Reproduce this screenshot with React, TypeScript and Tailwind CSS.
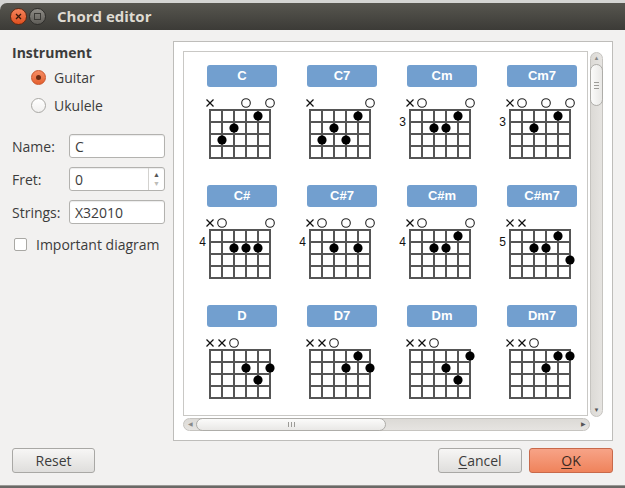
import React from 'react';

// Chord editor dialog (Ubuntu Ambiance look)

type Chord = {
  name: string;
  marks: string; // per string: x = muted, o = open, - = nothing
  dots: [number, number][]; // [string, fret]
  pos?: number;
};

const CHORDS: Chord[] = [
  { name: 'C', marks: 'x--o-o', dots: [[1, 3], [2, 2], [4, 1]] },
  { name: 'C7', marks: 'x----o', dots: [[1, 3], [2, 2], [3, 3], [4, 1]] },
  { name: 'Cm', marks: 'xo---o', dots: [[2, 2], [3, 2], [4, 1]], pos: 3 },
  { name: 'Cm7', marks: 'xo-o-o', dots: [[2, 2], [4, 1]], pos: 3 },
  { name: 'C#', marks: 'xo---o', dots: [[2, 2], [3, 2], [4, 2]], pos: 4 },
  { name: 'C#7', marks: 'xo-o-o', dots: [[2, 2], [4, 2]], pos: 4 },
  { name: 'C#m', marks: 'xo---o', dots: [[2, 2], [3, 2], [4, 1]], pos: 4 },
  { name: 'C#m7', marks: 'xx----', dots: [[2, 2], [3, 2], [4, 1], [5, 3]], pos: 5 },
  { name: 'D', marks: 'xxo---', dots: [[3, 2], [4, 3], [5, 2]] },
  { name: 'D7', marks: 'xxo---', dots: [[3, 2], [4, 1], [5, 2]] },
  { name: 'Dm', marks: 'xxo---', dots: [[3, 2], [4, 3], [5, 1]] },
  { name: 'Dm7', marks: 'xxo---', dots: [[3, 2], [4, 1], [5, 1]] },
];

const sx = (i: number) => 3 + 12 * i;

function Diagram({ c }: { c: Chord }) {
  return (
    <svg width={100} height={98} className="block overflow-visible">
      {[0, 1, 2, 3, 4].map((j) => (
        <line key={'f' + j} x1={2} x2={64} y1={23 + 12 * j} y2={23 + 12 * j} stroke="#555" strokeWidth={2} />
      ))}
      {[0, 1, 2, 3, 4, 5].map((i) => (
        <line key={'s' + i} x1={sx(i)} x2={sx(i)} y1={22} y2={72} stroke="#555" strokeWidth={2} />
      ))}
      {c.marks.split('').map((m, i) =>
        m === 'x' ? (
          <g key={'m' + i} stroke="#111" strokeWidth={1.2}>
            <line x1={sx(i) - 3.5} y1={12.5} x2={sx(i) + 3.5} y2={19.5} />
            <line x1={sx(i) + 3.5} y1={12.5} x2={sx(i) - 3.5} y2={19.5} />
          </g>
        ) : m === 'o' ? (
          <circle key={'m' + i} cx={sx(i)} cy={16} r={4.3} fill="#fff" stroke="#222" strokeWidth={1.1} />
        ) : null,
      )}
      {c.dots.map(([s, f]) => (
        <circle key={`d${s}${f}`} cx={sx(s)} cy={17 + 12 * f} r={4.6} fill="#000" />
      ))}
      {c.pos && (
        <text x={-1} y={39} textAnchor="end" fontSize={12} fill="#111" fontFamily="'Liberation Sans', Arial, sans-serif">
          {c.pos}
        </text>
      )}
    </svg>
  );
}

function Radio({ checked }: { checked?: boolean }) {
  return checked ? (
    <span className="w-[15px] h-[15px] rounded-full border border-[#c9552b] bg-gradient-to-b from-[#f58c62] to-[#e5602f] flex items-center justify-center">
      <span className="w-[5px] h-[5px] rounded-full bg-[#6b2b12]" />
    </span>
  ) : (
    <span className="w-[15px] h-[15px] rounded-full border border-[#a9a8a4] bg-gradient-to-b from-white to-[#f1f0ef]" />
  );
}

function Field({ label, value, spin }: { label: string; value: string; spin?: boolean }) {
  return (
    <div className="flex items-center h-[24px]">
      <span className="w-[57px]">{label}</span>
      <div className="w-[96px] h-[24px] bg-white border border-[#b3b2af] rounded-[3px] flex items-center shadow-[inset_0_1px_1px_rgba(0,0,0,0.08)]">
        <span className="pl-[5px] flex-1">{value}</span>
        {spin && (
          <div className="w-[16px] h-full border-l border-[#d3d2cf] flex flex-col items-center justify-center text-[7px] leading-[9px]">
            <span className="text-[#555]">▲</span>
            <span className="text-[#bdbcb8]">▼</span>
          </div>
        )}
      </div>
    </div>
  );
}

function Button({ children, primary, w }: { children: React.ReactNode; primary?: boolean; w: string }) {
  return (
    <div
      className={`${w} h-[25px] rounded-[3px] border flex items-center justify-center ${
        primary
          ? 'border-[#c8694a] bg-gradient-to-b from-[#f7a387] to-[#ef835b] text-[#3b2a22]'
          : 'border-[#a9a8a5] bg-gradient-to-b from-[#f7f6f5] to-[#dfdedc] text-[#3c3c3c]'
      }`}
    >
      {children}
    </div>
  );
}

export default function App() {
  return (
    <div
      className="w-[625px] h-[488px] overflow-hidden bg-[#d5d5d3] text-[14px] text-[#3c3c3c]"
      style={{ fontFamily: "'Open Sans', 'Noto Sans', sans-serif" }}
    >
      {/* title bar */}
      <div className="mt-[3px] h-[27px] rounded-tl-[7px] bg-gradient-to-b from-[#57564f] to-[#3c3b37] flex items-center">
        <div className="ml-[10px] w-[17px] h-[17px] rounded-full border border-[#5e2a14] bg-gradient-to-b from-[#f5835a] to-[#df4f1c] flex items-center justify-center">
          <svg width="7" height="7" viewBox="0 0 7 7">
            <path d="M1 1L6 6M6 1L1 6" stroke="#3a1a0c" strokeWidth="1.3" />
          </svg>
        </div>
        <div className="ml-[2px] w-[17px] h-[17px] rounded-full border border-[#2e2d2a] bg-gradient-to-b from-[#8e8c86] to-[#5f5d58] flex items-center justify-center">
          <span className="w-[7px] h-[7px] border border-[#3a3935]" />
        </div>
        <span className="ml-[11px] font-bold text-[15px] text-[#dfdbd2]">Chord editor</span>
      </div>

      {/* body */}
      <div className="h-[455px] bg-[#f2f1f0] flex flex-col">
        <div className="flex pt-[11px]">
          <div className="w-[173px] pl-[12px]">
            <div className="h-[22px] flex items-center font-bold">Instrument</div>
            <div className="h-[28px] flex items-center pl-[19px] gap-[8px]">
              <Radio checked />
              <span>Guitar</span>
            </div>
            <div className="h-[28px] flex items-center pl-[19px] gap-[8px]">
              <Radio />
              <span>Ukulele</span>
            </div>
            <div className="mt-[15px] flex flex-col gap-[9px]">
              <Field label="Name:" value="C" />
              <Field label="Fret:" value="0" spin />
              <Field label="Strings:" value="X32010" />
            </div>
            <div className="mt-[12px] h-[16px] flex items-center gap-[9px] pl-[2px]">
              <span className="w-[13px] h-[13px] rounded-[2px] border border-[#a9a8a4] bg-white" />
              <span>Important diagram</span>
            </div>
          </div>

          {/* chord frame */}
          <div className="w-[440px] h-[400px] border border-[#bebdba] bg-white pl-[9px] pt-[9px]">
            <div className="flex">
              <div className="w-[407px] flex flex-col">
                <div className="w-[405px] h-[365px] border border-[#c9c8c5] overflow-hidden bg-white">
                  <div className="grid grid-cols-[repeat(4,100px)] pl-[23px] pt-[13px]">
                    {CHORDS.map((c) => (
                      <div key={c.name} className="h-[120px]">
                        <div
                          className="w-[70px] h-[22px] rounded-[3px] bg-[#729fcf] text-white font-bold text-[13px] flex items-center justify-center"
                          style={{ fontFamily: "'Liberation Sans', Arial, sans-serif" }}
                        >
                          {c.name}
                        </div>
                        <Diagram c={c} />
                      </div>
                    ))}
                  </div>
                </div>
                {/* horizontal scrollbar */}
                <div className="mt-[2px] h-[13px] rounded-full border border-[#c6c4c0] bg-gradient-to-b from-[#dcdad6] to-[#e6e4e1] flex items-center">
                  <span className="w-[12px] text-center text-[6px] text-[#888]">◀</span>
                  <div className="w-[190px] h-[13px] -my-px rounded-full border border-[#aeada9] bg-gradient-to-b from-[#fbfbfa] to-[#e9e8e6] flex items-center justify-center">
                    <svg width="7" height="5" viewBox="0 0 7 5">
                      <path d="M0.5 0v5M3.5 0v5M6.5 0v5" stroke="#9c9b97" strokeWidth="1" />
                    </svg>
                  </div>
                  <div className="flex-1" />
                  <span className="w-[12px] text-center text-[6px] text-[#555]">▶</span>
                </div>
              </div>
              {/* vertical scrollbar */}
              <div className="mt-[1px] w-[13px] h-[365px] rounded-full border border-[#c6c4c0] bg-gradient-to-r from-[#dcdad6] to-[#e6e4e1] flex flex-col items-center">
                <span className="h-[11px] leading-[11px] text-[6px] text-[#888]">▲</span>
                <div className="w-[13px] h-[42px] -mx-px rounded-full border border-[#aeada9] bg-gradient-to-r from-[#fbfbfa] to-[#e9e8e6] flex items-center justify-center">
                  <svg width="5" height="7" viewBox="0 0 5 7">
                    <path d="M0 0.5h5M0 3.5h5M0 6.5h5" stroke="#9c9b97" strokeWidth="1" />
                  </svg>
                </div>
                <div className="flex-1" />
                <span className="h-[11px] leading-[11px] text-[6px] text-[#555]">▼</span>
              </div>
            </div>
          </div>
        </div>

        {/* buttons */}
        <div className="mt-[7px] flex items-center pl-[12px] pr-[12px]">
          <Button w="w-[83px]">Reset</Button>
          <div className="flex-1" />
          <Button w="w-[84px]">
            <span>
              <span className="underline underline-offset-2">C</span>ancel
            </span>
          </Button>
          <div className="w-[7px]" />
          <Button w="w-[84px]" primary>
            <span>
              <span className="underline underline-offset-2">O</span>K
            </span>
          </Button>
        </div>
      </div>
      <div className="h-[3px] border-t border-[#9a9996] bg-[#6a6966]" />
    </div>
  );
}
